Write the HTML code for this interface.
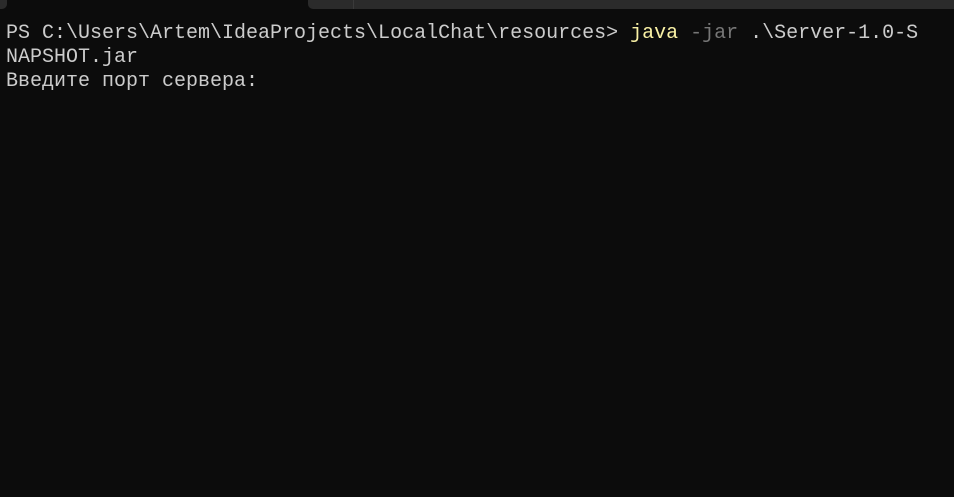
<!DOCTYPE html>
<html><head><meta charset="utf-8"><style>
html,body{margin:0;padding:0;background:#0c0c0c;width:954px;height:497px;overflow:hidden}
.t{position:absolute;left:6px;top:22px;font-family:"Liberation Mono","DejaVu Sans Mono",monospace;font-size:20px;line-height:24px;color:#cccccc;white-space:pre}
.y{color:#f9f1a5}.g{color:#767676}
.bar{position:absolute;top:0;height:9px;background:#2b2b2b}
</style></head><body>
<div class="bar" style="left:0;width:7px;border-radius:0 0 5px 0"></div>
<div class="bar" style="left:308px;width:646px;border-radius:0 0 0 5px"></div>
<div style="position:absolute;left:353px;top:0;width:1px;height:9px;background:#3a3a3a"></div>
<div class="t">PS C:\Users\Artem\IdeaProjects\LocalChat\resources&gt; <span class="y">java</span> <span class="g">-jar</span> .\Server-1.0-S
NAPSHOT.jar
Введите порт сервера:</div>
</body></html>
